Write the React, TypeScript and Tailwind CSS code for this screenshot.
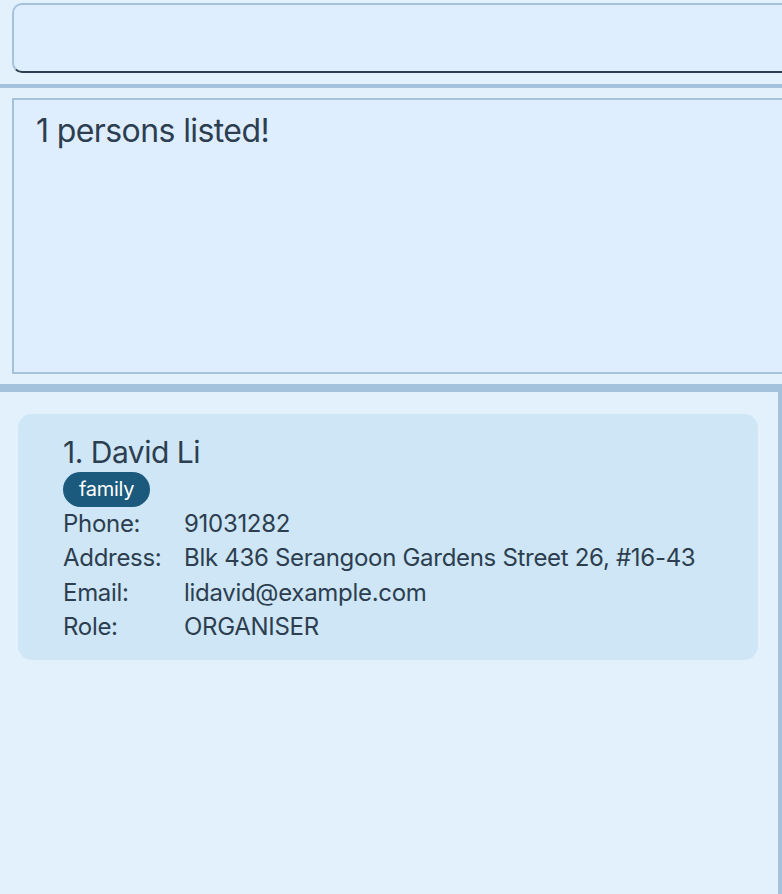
const person = {
  index: 1,
  name: "David Li",
  tags: ["family"],
  fields: [
    ["Phone:", "91031282"],
    ["Address:", "Blk 436 Serangoon Gardens Street 26, #16-43"],
    ["Email:", "lidavid@example.com"],
    ["Role:", "ORGANISER"],
  ],
};

function PersonCard() {
  return (
    <div className="rounded-[14px] bg-[#cee6f5] h-[246px] pl-[45px] pt-[20px]">
      <div className="text-[30px] leading-[36px] tracking-[-0.5px] text-[#2c3e50]">
        {person.index}. {person.name}
      </div>
      <div className="flex gap-2 mt-[2px]">
        {person.tags.map((t) => (
          <span
            key={t}
            className="h-[35px] px-4 rounded-full bg-[#1b5a7c] text-white text-[20px] leading-[35px] tracking-[-0.3px]"
          >
            {t}
          </span>
        ))}
      </div>
      <div className="grid grid-cols-[121px_1fr] text-[24px] leading-[34.3px] tracking-[-0.3px] text-[#2c3e50]">
        {person.fields.map(([k, v]) => (
          <div key={k} className="contents">
            <span>{k}</span>
            <span>{v}</span>
          </div>
        ))}
      </div>
    </div>
  );
}

export default function App() {
  return (
    <div
      className="w-[782px] h-[894px] overflow-hidden bg-[#e3f1fd] flex flex-col"
      style={{ fontFamily: "Inter, 'Noto Sans', sans-serif" }}
    >
      {/* command box */}
      <div className="pt-[3px] pl-3 h-[84px]">
        <div className="w-[820px] h-[70px] rounded-[10px] bg-[#deeefe] border-2 border-[#a4c2dc] border-b-[#2c3e50]" />
      </div>
      <div className="h-1 bg-[#a4c2dc]" />

      {/* result display */}
      <div className="pt-[10px] pl-3 h-[296px]">
        <div className="w-[820px] h-[276px] bg-[#deeefe] border-2 border-[#a4c2dc] pl-[22px] pt-[11px]">
          <div className="text-[32px] leading-[40px] tracking-[-0.6px] text-[#2c3e50]">1 persons listed!</div>
        </div>
      </div>
      <div className="h-2 bg-[#a4c2dc]" />

      {/* person list */}
      <div className="flex-1 border-r-4 border-[#a4c2dc] pl-[18px] pr-[20px] pt-[22px]">
        <PersonCard />
      </div>
    </div>
  );
}
